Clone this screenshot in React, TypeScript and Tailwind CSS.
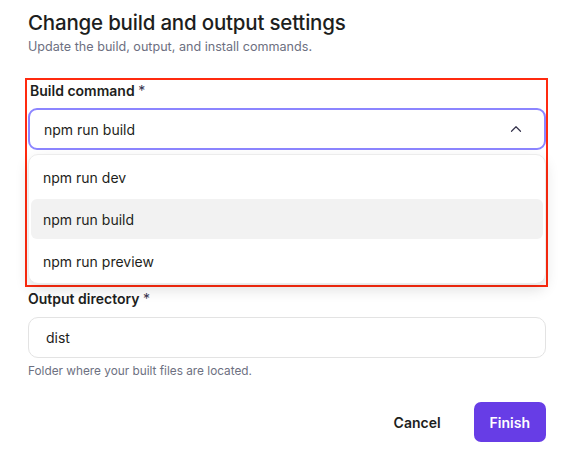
import { ChevronUp } from 'lucide-react';

const options = ['npm run dev', 'npm run build', 'npm run preview'];

export default function App() {
  const selected = 'npm run build';

  return (
    <div className="min-h-screen bg-white font-['Inter',sans-serif] text-[#1d1e20]">
      <div className="pl-[28px] pr-[18px] pt-[10px]">
        <h1 className="text-[20.5px] leading-[26px] font-medium tracking-[-0.2px]">Change build and output settings</h1>
        <p className="text-[12.6px] leading-[20px] text-[#6d7081] mt-[1px]">Update the build, output, and install commands.</p>

        {/* Highlighted dropdown region */}
        <div className="-ml-[3px] -mr-[2px] mt-[21px] border-2 border-[#ff2a0f] pl-[1px] pr-0 pt-[1px] pb-[1px]">
          <label className="block pl-[2px] text-[14px] leading-[20px] font-semibold">
            Build command <span className="font-normal text-[#36344d]">*</span>
          </label>
          <button className="mt-[7px] w-full h-[42px] flex items-center justify-between pl-[14px] pr-[19px] rounded-[9px] border-2 border-[#8c85ff] bg-white text-left">
            <span className="text-[14px]">{selected}</span>
            <ChevronUp className="w-[18px] h-[18px] text-[#36344d]" strokeWidth={1.6} />
          </button>
          <div className="mt-[4px] flex flex-col gap-[2px] rounded-[10px] border border-[#ececec] bg-white p-[2px] shadow-[0_6px_14px_rgba(0,0,0,0.12)]">
            {options.map((o) => (
              <div
                key={o}
                className={`h-[40px] flex items-center px-[12px] rounded-[6px] text-[14px] ${
                  o === selected ? 'bg-[#f2f2f2]' : ''
                }`}
              >
                {o}
              </div>
            ))}
          </div>
        </div>

        <label className="block mt-[2px] text-[14px] leading-[20px] font-semibold">
          Output directory <span className="font-normal text-[#36344d]">*</span>
        </label>
        <div className="mt-[8px] h-[41px] flex items-center px-[17px] rounded-[10px] border border-[#e3e3e3] text-[14px]">
          dist
        </div>
        <p className="mt-[5px] text-[11.8px] leading-[16px] text-[#6d7081]">Folder where your built files are located.</p>

        <div className="mt-[23px] flex items-center justify-end gap-[33px]">
          <button className="text-[14px] font-semibold">Cancel</button>
          <button className="h-[40px] px-[16px] rounded-[7px] bg-[#673de6] text-white text-[14px] font-semibold">Finish</button>
        </div>
      </div>
    </div>
  );
}
